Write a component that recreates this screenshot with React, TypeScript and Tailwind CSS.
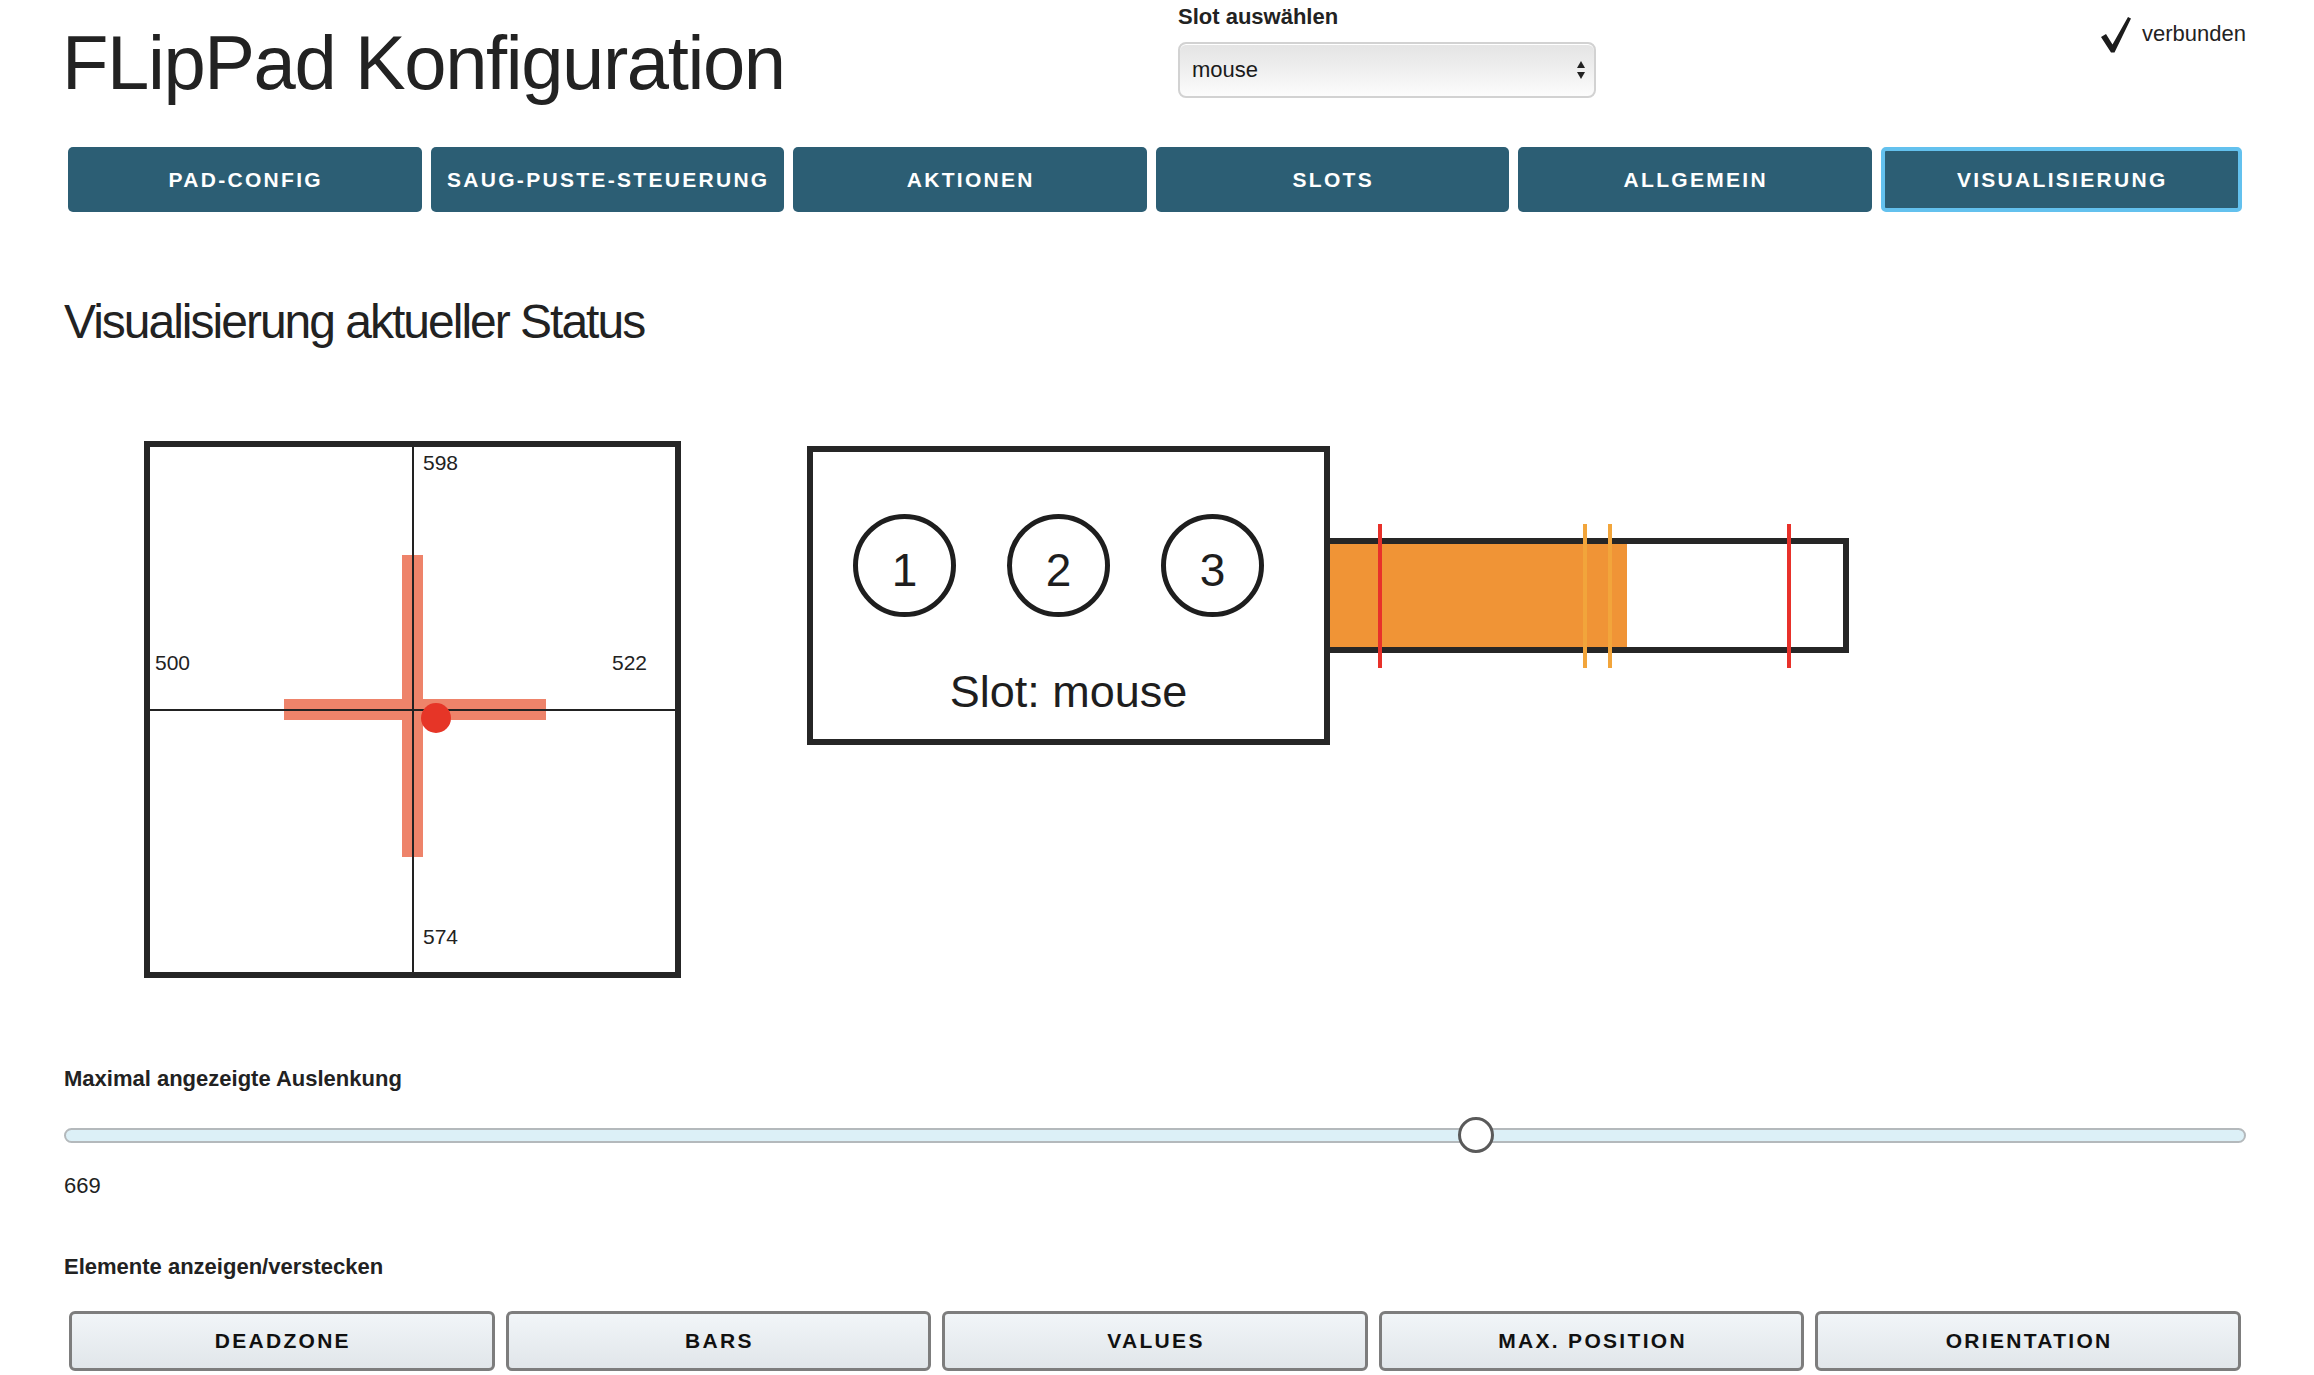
import React from "react";

const tabs = [
  "PAD-CONFIG",
  "SAUG-PUSTE-STEUERUNG",
  "AKTIONEN",
  "SLOTS",
  "ALLGEMEIN",
  "VISUALISIERUNG",
];

const toggles = ["DEADZONE", "BARS", "VALUES", "MAX. POSITION", "ORIENTATION"];

function CheckMark() {
  return (
    <svg width="31" height="36" viewBox="0 0 31 36" className="mt-[17px] shrink-0">
      <polygon points="1,20 6,17 12.5,27.5 28,0 31,1.5 14.5,35.5 11,35.5" fill="#1c1c1c" />
    </svg>
  );
}

function Joystick() {
  return (
    <div className="relative w-[537px] h-[537px] border-[6px] border-[#262626] bg-white shrink-0">
      {/* bars */}
      <div className="absolute left-[252px] top-[108px] w-[21px] h-[302px] bg-[#ee836a]" />
      <div className="absolute left-[134px] top-[252px] w-[262px] h-[21px] bg-[#ee836a]" />
      {/* crosshair */}
      <div className="absolute left-[262px] top-0 w-[2px] h-full bg-[#222]" />
      <div className="absolute top-[262px] left-0 h-[2px] w-full bg-[#222]" />
      {/* dot */}
      <div className="absolute left-[271px] top-[256px] w-[30px] h-[30px] rounded-full bg-[#e63527]" />
      {/* labels */}
      <span className="absolute left-[273px] top-[5px] text-[21px] leading-[21px] text-[#222]">598</span>
      <span className="absolute left-[5px] top-[205px] text-[21px] leading-[21px] text-[#222]">500</span>
      <span className="absolute left-[462px] top-[205px] text-[21px] leading-[21px] text-[#222]">522</span>
      <span className="absolute left-[273px] top-[479px] text-[21px] leading-[21px] text-[#222]">574</span>
    </div>
  );
}

function SlotPanel() {
  return (
    <div className="flex items-start mt-[5px] ml-[126px]">
      <div className="w-[523px] h-[299px] border-[6px] border-[#262626] bg-white flex flex-col shrink-0">
        <div className="flex gap-[51px] pl-[40px] mt-[62px]">
          {["1", "2", "3"].map((n) => (
            <div
              key={n}
              className="w-[103px] h-[103px] rounded-full border-[5px] border-[#1e1e1e] flex items-center justify-center text-[46px] leading-none text-[#1e1e1e] pt-[8px]"
            >
              {n}
            </div>
          ))}
        </div>
        <div className="mt-[52px] text-center text-[45px] leading-[45px] text-[#1e1e1e]">Slot: mouse</div>
      </div>
      <div className="relative mt-[92px] w-[519px] h-[115px] border-[6px] border-l-0 border-[#262626] bg-white shrink-0">
        <div className="w-[297px] h-full bg-[#f09436]" />
        <div className="absolute left-[48px] top-[-20px] w-[4px] h-[144px] bg-[#e8312a]" />
        <div className="absolute left-[253px] top-[-20px] w-[4px] h-[144px] bg-[#f2a53b]" />
        <div className="absolute left-[278px] top-[-20px] w-[4px] h-[144px] bg-[#f2a53b]" />
        <div className="absolute left-[457px] top-[-20px] w-[4px] h-[144px] bg-[#e8312a]" />
      </div>
    </div>
  );
}

export default function App() {
  return (
    <div
      className="w-full min-h-screen bg-white text-[#222]"
      style={{ fontFamily: '"Liberation Sans", Arial, Helvetica, sans-serif' }}
    >
      <div className="pl-[64px] pr-[68px]">
        {/* header */}
        <div className="flex items-start h-[147px]">
          <div className="w-[1114px] shrink-0">
            <h1 className="mt-[25px] -ml-[2px] text-[76px] leading-[76px] tracking-[-1.4px] font-normal text-[#222]">
              FLipPad Konfiguration
            </h1>
          </div>
          <div className="w-[418px] shrink-0 pt-[6px]">
            <div className="text-[22px] leading-[22px] font-bold text-[#222]">Slot auswählen</div>
            <div className="mt-[14px] h-[56px] rounded-[8px] border-2 border-[#d2d2d2] bg-gradient-to-b from-[#e4e4e4] via-[#efefef] to-[#fcfcfc] shadow-[inset_0_1px_0_#ffffff] flex items-center justify-between pl-[12px] pr-[8px]">
              <span className="text-[22px] leading-[22px] text-[#1a1a1a]">mouse</span>
              <svg width="10" height="20" viewBox="0 0 10 20">
                <polygon points="5,1 9,8 1,8" fill="#222" />
                <polygon points="1,12 9,12 5,19" fill="#222" />
              </svg>
            </div>
          </div>
          <div className="flex-1 flex justify-end items-start gap-[11px]">
            <CheckMark />
            <span className="mt-[23px] text-[22px] leading-[22px] text-[#222]">verbunden</span>
          </div>
        </div>

        {/* tabs */}
        <div className="flex gap-[9px] mx-[4px]">
          {tabs.map((t) => (
            <button
              key={t}
              className={
                "flex-1 h-[65px] rounded-[5px] bg-[#2c5e74] text-white font-bold text-[21px] tracking-[2.3px] flex items-center justify-center pl-[2px] " +
                (t === "VISUALISIERUNG" ? "border-4 border-[#63c1ee]" : "")
              }
            >
              {t}
            </button>
          ))}
        </div>

        {/* section heading */}
        <h2 className="mt-[86px] text-[48px] leading-[48px] tracking-[-2px] font-normal text-[#222]">
          Visualisierung aktueller Status
        </h2>

        {/* visual */}
        <div className="flex items-start mt-[95px] ml-[80px]">
          <Joystick />
          <SlotPanel />
        </div>

        {/* slider */}
        <div className="mt-[90px] text-[22px] leading-[22px] font-bold text-[#222]">Maximal angezeigte Auslenkung</div>
        <div className="relative mt-[27px] h-[36px] flex items-center">
          <div className="w-full h-[15px] rounded-full border-2 border-[#b4b9bc] bg-[#dcf0f7]" />
          <div className="absolute left-[64.7%] top-0 -translate-x-1/2 w-[36px] h-[36px] rounded-full border-[3px] border-[#5a5a5a] bg-white" />
        </div>
        <div className="mt-[22px] text-[22px] leading-[22px] text-[#222]">669</div>

        <div className="mt-[59px] text-[22px] leading-[22px] font-bold text-[#222]">Elemente anzeigen/verstecken</div>
        <div className="mt-[33px] flex gap-[11px] mx-[5px]">
          {toggles.map((t) => (
            <button
              key={t}
              className="flex-1 h-[60px] rounded-[6px] border-[3px] border-[#7d7d7d] bg-gradient-to-b from-[#f1f5f8] to-[#e1e6ea] text-[#111] font-bold text-[21px] tracking-[2.3px] flex items-center justify-center pl-[2px]"
            >
              {t}
            </button>
          ))}
        </div>
        <div className="h-[40px]" />
      </div>
    </div>
  );
}
